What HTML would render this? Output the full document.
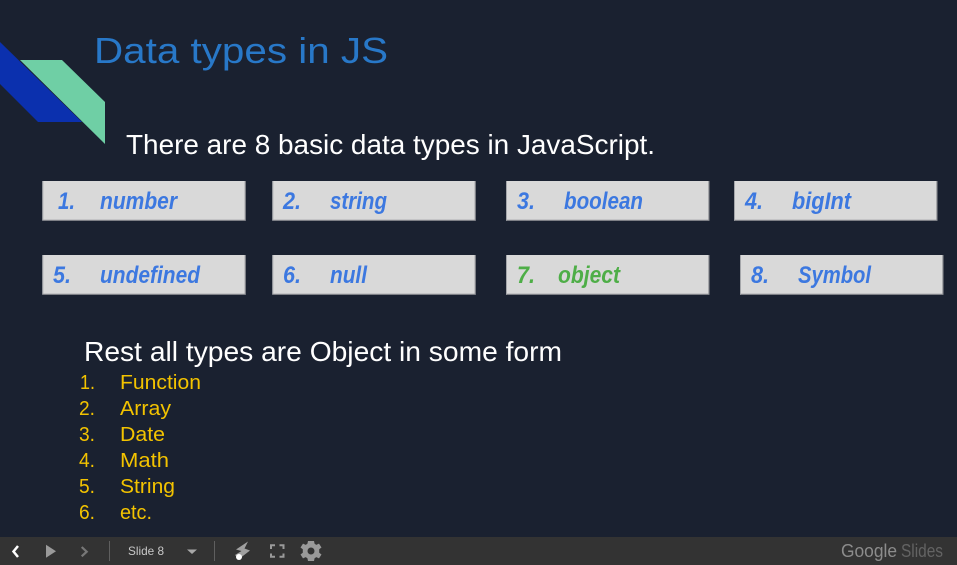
<!DOCTYPE html>
<html><head><meta charset="utf-8"><title>Data types in JS</title>
<style>
html,body{margin:0;padding:0;width:957px;height:565px;overflow:hidden;background:#1a2130}
svg{display:block}
text{font-family:"Liberation Sans",sans-serif}
.b{font-size:24px;font-weight:700;font-style:italic;fill:#3c78e0}
.g{font-size:24px;font-weight:700;font-style:italic;fill:#4eae47}
.y{font-size:20.500px;fill:#f3c300}
.w{fill:#fff}
</style></head><body>
<svg width="957" height="565" viewBox="0 0 957 565" xmlns="http://www.w3.org/2000/svg">
<rect width="957" height="565" fill="#1a2130"/>
<polygon points="0,42 82,122 38,122 0,84" fill="#0b30ae"/>
<polygon points="20,60 62,60 105,102 105,144" fill="#6fcfa5"/>
<text x="94" y="63" font-size="36" fill="#2878c8" textLength="294" lengthAdjust="spacingAndGlyphs">Data types in JS</text>
<text class="w" x="126" y="154" font-size="28" textLength="529" lengthAdjust="spacingAndGlyphs">There are 8 basic data types in JavaScript.</text>

<g fill="#d9d9d9">
<rect x="42.3" y="181" width="203.400" height="39.700"/>
<rect x="272.300" y="181" width="203.400" height="39.700"/>
<rect x="506" y="181" width="203.400" height="39.700"/>
<rect x="734" y="181" width="203.400" height="39.700"/>
<rect x="42.3" y="255" width="203.400" height="39.700"/>
<rect x="272.300" y="255" width="203.400" height="39.700"/>
<rect x="506" y="255" width="203.400" height="39.700"/>
<rect x="740" y="255" width="203.400" height="39.700"/>
</g>
<path d="M42.800 220.200 H245.200 V181 M272.800 220.200 H475.200 V181 M506.500 220.200 H708.900 V181 M734.500 220.200 H936.900 V181 M42.800 294.200 H245.200 V255 M272.800 294.200 H475.200 V255 M506.500 294.200 H708.900 V255 M740.500 294.200 H942.900 V255" fill="none" stroke="#85878c" stroke-width="1"/>
<path d="M42.800 220 V181 M272.800 220 V181 M506.500 220 V181 M734.500 220 V181 M42.800 294 V255 M272.800 294 V255 M506.500 294 V255 M740.500 294 V255" fill="none" stroke="#a4a6aa" stroke-width="1"/>

<text class="b" x="58" y="209" textLength="17" lengthAdjust="spacingAndGlyphs">1.</text>
<text class="b" x="100" y="209" textLength="77" lengthAdjust="spacingAndGlyphs">number</text>
<text class="b" x="283" y="209" textLength="18" lengthAdjust="spacingAndGlyphs">2.</text>
<text class="b" x="330" y="209" textLength="57" lengthAdjust="spacingAndGlyphs">string</text>
<text class="b" x="517" y="209" textLength="18" lengthAdjust="spacingAndGlyphs">3.</text>
<text class="b" x="564" y="209" textLength="79" lengthAdjust="spacingAndGlyphs">boolean</text>
<text class="b" x="745" y="209" textLength="18" lengthAdjust="spacingAndGlyphs">4.</text>
<text class="b" x="792" y="209" textLength="59" lengthAdjust="spacingAndGlyphs">bigInt</text>
<text class="b" x="53" y="283" textLength="18" lengthAdjust="spacingAndGlyphs">5.</text>
<text class="b" x="100" y="283" textLength="100" lengthAdjust="spacingAndGlyphs">undefined</text>
<text class="b" x="283" y="283" textLength="18" lengthAdjust="spacingAndGlyphs">6.</text>
<text class="b" x="330" y="283" textLength="37" lengthAdjust="spacingAndGlyphs">null</text>
<text class="g" x="517" y="283" textLength="18" lengthAdjust="spacingAndGlyphs">7.</text>
<text class="g" x="558" y="283" textLength="62" lengthAdjust="spacingAndGlyphs">object</text>
<text class="b" x="751" y="283" textLength="18" lengthAdjust="spacingAndGlyphs">8.</text>
<text class="b" x="798" y="283" textLength="73" lengthAdjust="spacingAndGlyphs">Symbol</text>

<text class="w" x="84" y="361" font-size="28" textLength="478" lengthAdjust="spacingAndGlyphs">Rest all types are Object in some form</text>

<text class="y" x="80" y="389" textLength="15" lengthAdjust="spacingAndGlyphs">1.</text>
<text class="y" x="120" y="389" textLength="81" lengthAdjust="spacingAndGlyphs">Function</text>
<text class="y" x="79" y="415" textLength="16" lengthAdjust="spacingAndGlyphs">2.</text>
<text class="y" x="120" y="415" textLength="51" lengthAdjust="spacingAndGlyphs">Array</text>
<text class="y" x="79" y="441" textLength="16" lengthAdjust="spacingAndGlyphs">3.</text>
<text class="y" x="120" y="441" textLength="45" lengthAdjust="spacingAndGlyphs">Date</text>
<text class="y" x="79" y="467" textLength="16" lengthAdjust="spacingAndGlyphs">4.</text>
<text class="y" x="120" y="467" textLength="49" lengthAdjust="spacingAndGlyphs">Math</text>
<text class="y" x="79" y="493" textLength="16" lengthAdjust="spacingAndGlyphs">5.</text>
<text class="y" x="120" y="493" textLength="55" lengthAdjust="spacingAndGlyphs">String</text>
<text class="y" x="79" y="519" textLength="16" lengthAdjust="spacingAndGlyphs">6.</text>
<text class="y" x="120" y="519" textLength="32" lengthAdjust="spacingAndGlyphs">etc.</text>

<rect x="0" y="537" width="957" height="28" fill="#333333"/>
<path d="M18 546 L13.500 551.500 L18 557" fill="none" stroke="#fff" stroke-width="2.500"/>
<polygon points="46,544.700 56,551.300 46,557.700" fill="#9a9a9a"/>
<path d="M81.700 547 L86.700 551.700 L81.700 556.300" fill="none" stroke="#777" stroke-width="2.200"/>
<rect x="109" y="541" width="1" height="20" fill="#5f5f5f"/>
<text x="128" y="555" font-size="12" fill="#c8c8c8" textLength="36" lengthAdjust="spacingAndGlyphs">Slide 8</text>
<polygon points="187,549.500 197,549.500 192,554" fill="#a8a8a8"/>
<rect x="214" y="541" width="1" height="20" fill="#5f5f5f"/>

<polygon points="248,541.500 236,549.500 241.500,551 235,555 239,559 250,550.500 244.500,548.500" fill="#a0a0a0"/>
<circle cx="239" cy="557" r="3" fill="#fff"/>
<path d="M271 549 V545.300 H275 M279.500 545.300 H283.500 V549 M283.500 553.500 V556.800 H279.500 M275 556.800 H271 V553.500" fill="none" stroke="#9a9a9a" stroke-width="2"/>
<g transform="translate(311 551)">
<path d="M-3 -10 H3 L3.600 -7.200 L5.300 -6.100 L8 -7.400 L10.500 -3.500 L8.200 -1.700 V1.700 L10.500 3.500 L8 7.400 L5.300 6.100 L3.600 7.200 L3 10 H-3 L-3.600 7.200 L-5.300 6.100 L-8 7.400 L-10.500 3.500 L-8.200 1.700 V-1.700 L-10.500 -3.500 L-8 -7.400 L-5.300 -6.100 L-3.600 -7.200 Z M0 -3.500 A3.500 3.500 0 1 0 0 3.500 A3.500 3.500 0 1 0 0 -3.500 Z" fill="#9a9a9a" fill-rule="evenodd"/>
</g>

<text x="841" y="557" font-size="18" fill="#8c8c8c" textLength="56" lengthAdjust="spacingAndGlyphs">Google</text>
<text x="901" y="557" font-size="18" fill="#636363" textLength="42" lengthAdjust="spacingAndGlyphs">Slides</text>
</svg>
</body></html>
